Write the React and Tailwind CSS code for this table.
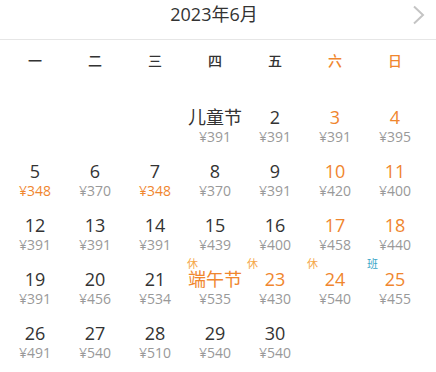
const WEEK = ['一', '二', '三', '四', '五', '六', '日']

// tag: 'rest' | 'work'
const DAYS = [
  null, null, null,
  { label: '儿童节', price: 391 },
  { label: '2', price: 391 },
  { label: '3', price: 391 },
  { label: '4', price: 395 },
  { label: '5', price: 348, cheap: true },
  { label: '6', price: 370 },
  { label: '7', price: 348, cheap: true },
  { label: '8', price: 370 },
  { label: '9', price: 391 },
  { label: '10', price: 420 },
  { label: '11', price: 400 },
  { label: '12', price: 391 },
  { label: '13', price: 391 },
  { label: '14', price: 391 },
  { label: '15', price: 439 },
  { label: '16', price: 400 },
  { label: '17', price: 458 },
  { label: '18', price: 440 },
  { label: '19', price: 391 },
  { label: '20', price: 456 },
  { label: '21', price: 534 },
  { label: '端午节', price: 535, tag: 'rest', holiday: true },
  { label: '23', price: 430, tag: 'rest', holiday: true },
  { label: '24', price: 540, tag: 'rest', holiday: true },
  { label: '25', price: 455, tag: 'work' },
  { label: '26', price: 491 },
  { label: '27', price: 540 },
  { label: '28', price: 510 },
  { label: '29', price: 540 },
  { label: '30', price: 540 },
]

function DayCell({ day, col }) {
  if (!day) return <div className="h-[54px]" />
  const weekend = col >= 5
  const orange = weekend || day.holiday
  return (
    <div className="relative h-[54px] pt-[10px] flex flex-col items-center">
      {day.tag === 'rest' && (
        <span className="absolute left-[2px] top-0 text-[11px] leading-[12px] text-[#f5a84a]">休</span>
      )}
      {day.tag === 'work' && (
        <span className="absolute left-[2px] top-0 text-[11px] leading-[12px] text-[#3aa6c8]">班</span>
      )}
      <div className={`text-[18px] leading-[22px] ${orange ? 'text-[#f0862e]' : 'text-[#333333]'}`}>{day.label}</div>
      <div className={`text-[14px] leading-[18px] ${day.cheap ? 'text-[#f0862e]' : 'text-[#999999]'}`}>¥{day.price}</div>
    </div>
  )
}

export default function App() {
  return (
    <div className="w-[436px] h-[372px] bg-white overflow-hidden" style={{ fontFamily: '"Open Sans", "Noto Sans CJK SC", sans-serif' }}>
      <div className="relative h-[40px] pr-[8px] border-b border-[#e6e6e6] flex justify-center">
        <span className="text-[18px] leading-[28px] text-[#333333]">2023年6月</span>
        <svg className="absolute right-[10px] top-[5px]" width="14" height="20" viewBox="0 0 14 20">
          <polyline points="2,1.5 11,10 2,18.5" fill="none" stroke="#c4c4c4" strokeWidth="2" />
        </svg>
      </div>
      <div className="pl-[5px] pr-[11px]">
        <div className="grid grid-cols-7 h-[40px] items-center">
          {WEEK.map((w, i) => (
            <div key={w} className={`text-center text-[14px] font-medium ${i >= 5 ? 'text-[#f0862e]' : 'text-[#333333]'}`}>{w}</div>
          ))}
        </div>
        <div className="grid grid-cols-7 mt-[16px]">
          {DAYS.map((d, i) => (
            <DayCell key={i} day={d} col={i % 7} />
          ))}
        </div>
      </div>
    </div>
  )
}
